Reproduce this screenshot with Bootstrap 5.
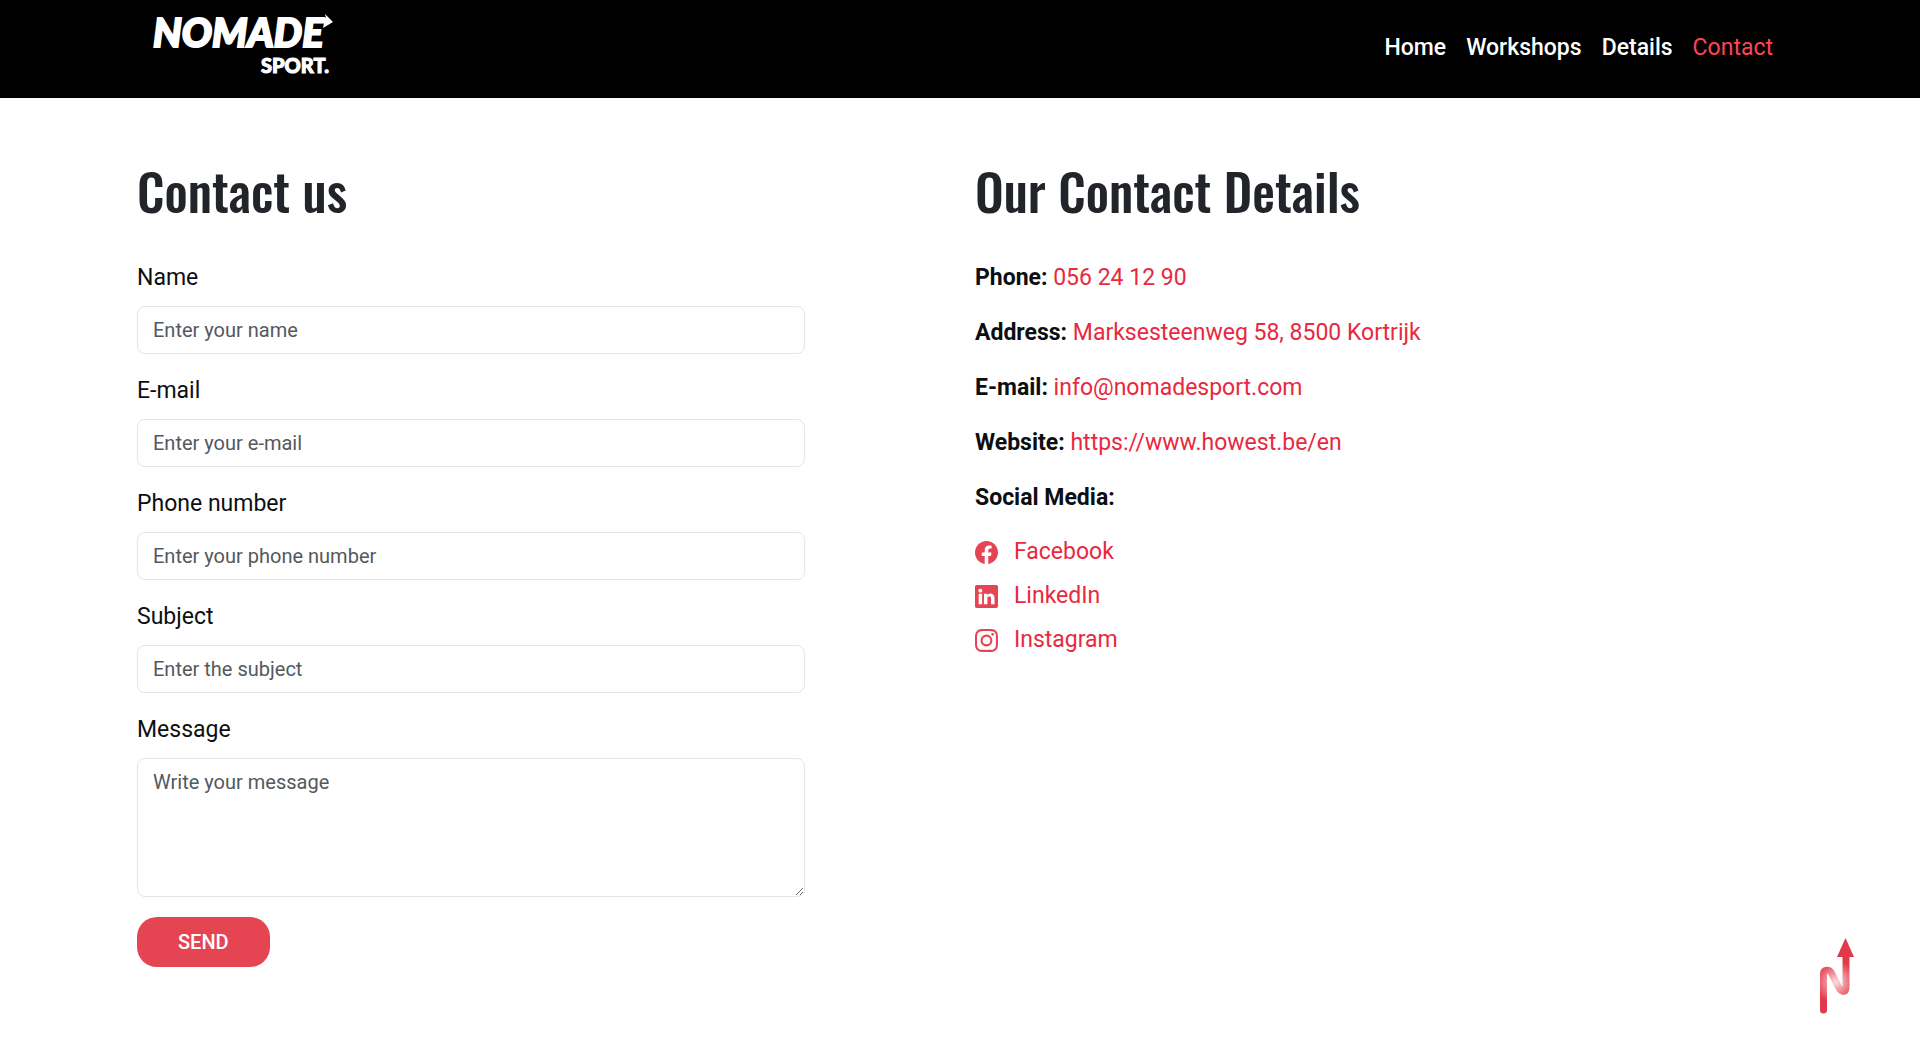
<!DOCTYPE html>
<html lang="en">
<head>
<meta charset="utf-8">
<meta name="viewport" content="width=device-width, initial-scale=1">
<title>Nomade Sport - Contact</title>
<link href="https://cdn.jsdelivr.net/npm/bootstrap@5.3.0/dist/css/bootstrap.min.css" rel="stylesheet">
<style>
  :root { --nomade-red: #e54552; --nomade-link: #e8293e; }
  body { font-family: Roboto, "Liberation Sans", sans-serif; font-size: 23px; line-height: 34px; color: #0c0f12; background: #fff; }
  .container, .page-main .row { --bs-gutter-x: 30px; }
  @media (min-width: 1700px) { .container { max-width: 1676px; } }
  .site-nav { background: #000; padding: 10px 0 16px; }
  .site-nav .navbar-brand { padding: 0; margin-left: 15px; }
  .site-nav .navbar-nav { --bs-nav-link-padding-y: 8px; }
  .site-nav .nav-link { color: #fff; font-weight: 500; padding-left: 10px !important; padding-right: 10px !important; }
  .site-nav .nav-link.active { color: #ff4358; font-weight: 400; }
  .logo-main { font: italic 900 40px Lato, sans-serif; stroke: #fff; stroke-width: 2px; }
  .logo-sub { font: 900 20px Lato, sans-serif; stroke: #fff; stroke-width: 1px; }
  .page-main { padding-top: 62px; padding-bottom: 60px; }
  .page-title { font-family: Oswald, "Liberation Sans Narrow", "Liberation Sans", sans-serif; font-size: 51px; line-height: 60px; font-weight: 500; color: #212529; margin-bottom: 40px; }
  .field { margin-bottom: 19px; }
  .field .form-label { display: block; line-height: 36px; margin-bottom: 10px; }
  .field .form-control { font-size: 20px; line-height: 30px; padding: 8px 15px; border-color: #e2e6e9; border-radius: 8px; }
  .field .form-control::placeholder { color: #54595e; opacity: 1; }
  .field textarea.form-control { height: 139px; display: block; }
  .btn-send { background: var(--nomade-red); color: #fff; font-size: 20px; line-height: 30px; font-weight: 500; margin-top: 1px; padding: 9px 40px; border-radius: 20px; }
  .btn-send:hover { background: #c93643; color: #fff; }
  .facts { gap: 19px; line-height: 36px; }
  .facts a, .social a { color: var(--nomade-link); text-decoration: none; }
  .social { margin-top: 19px; gap: 10px; }
  .social a { gap: 16px; }
  .social svg { width: 23px; height: 23px; fill: var(--nomade-red); }
  .to-top { right: 64px; bottom: 26px; line-height: 0; }
</style>
<script src="https://cdn.jsdelivr.net/npm/bootstrap@5.3.0/dist/js/bootstrap.bundle.min.js" defer></script>
</head>
<body>
<nav class="navbar navbar-expand site-nav">
  <div class="container">
    <a class="navbar-brand" href="#" aria-label="Nomade Sport">
      <svg class="d-block" width="184" height="72" viewBox="0 0 184 72" fill="#fff">
        <text class="logo-main" x="1" y="37">NOMADE</text>
        <text class="logo-sub" x="177" y="63" text-anchor="end">SPORT.</text>
        <path d="M160 8H174L173 4L181 12L171 18L172 13H160Z"/>
      </svg>
    </a>
    <ul class="navbar-nav ms-auto pt-1">
      <li class="nav-item"><a class="nav-link" href="#">Home</a></li>
      <li class="nav-item"><a class="nav-link" href="#">Workshops</a></li>
      <li class="nav-item"><a class="nav-link" href="#">Details</a></li>
      <li class="nav-item"><a class="nav-link active" aria-current="page" href="#">Contact</a></li>
    </ul>
  </div>
</nav>

<main class="container page-main">
  <div class="row">
    <section class="col-12 col-lg-5">
      <h1 class="page-title">Contact us</h1>
      <form>
        <div class="field">
          <label class="form-label" for="name">Name</label>
          <input class="form-control" type="text" id="name" placeholder="Enter your name">
        </div>
        <div class="field">
          <label class="form-label" for="email">E-mail</label>
          <input class="form-control" type="email" id="email" placeholder="Enter your e-mail">
        </div>
        <div class="field">
          <label class="form-label" for="phone">Phone number</label>
          <input class="form-control" type="tel" id="phone" placeholder="Enter your phone number">
        </div>
        <div class="field">
          <label class="form-label" for="subject">Subject</label>
          <input class="form-control" type="text" id="subject" placeholder="Enter the subject">
        </div>
        <div class="field">
          <label class="form-label" for="message">Message</label>
          <textarea class="form-control" id="message" placeholder="Write your message"></textarea>
        </div>
        <button class="btn btn-send" type="button">SEND</button>
      </form>
    </section>

    <section class="col-12 col-lg-6 offset-lg-1">
      <h2 class="page-title">Our Contact Details</h2>
      <div class="facts d-flex flex-column">
        <p class="mb-0"><strong>Phone:</strong> <a href="#">056 24 12 90</a></p>
        <p class="mb-0"><strong>Address:</strong> <a href="#">Marksesteenweg 58, 8500 Kortrijk</a></p>
        <p class="mb-0"><strong>E-mail:</strong> <a href="#">info@nomadesport.com</a></p>
        <p class="mb-0"><strong>Website:</strong> <a href="#">https://www.howest.be/en</a></p>
        <p class="mb-0"><strong>Social Media:</strong></p>
      </div>
      <ul class="social list-unstyled d-flex flex-column align-items-start mb-0">
        <li><a class="d-flex align-items-center" href="#">
          <svg viewBox="0 0 16 16" aria-hidden="true"><path d="M16 8.049c0-4.446-3.582-8.05-8-8.05C3.58 0-.002 3.603-.002 8.05c0 4.017 2.926 7.347 6.75 7.951v-5.625h-2.03V8.05H6.75V6.275c0-2.017 1.195-3.131 3.022-3.131.876 0 1.791.157 1.791.157v1.98h-1.009c-.993 0-1.303.621-1.303 1.258v1.51h2.218l-.354 2.326H9.25V16c3.824-.604 6.75-3.934 6.75-7.951z"/></svg>
          Facebook</a></li>
        <li><a class="d-flex align-items-center" href="#">
          <svg viewBox="0 0 16 16" aria-hidden="true"><path d="M0 1.146C0 .513.526 0 1.175 0h13.65C15.474 0 16 .513 16 1.146v13.708c0 .633-.526 1.146-1.175 1.146H1.175C.526 16 0 15.487 0 14.854V1.146zm4.943 12.248V6.169H2.542v7.225h2.401zm-1.2-8.212c.837 0 1.358-.554 1.358-1.248-.015-.709-.52-1.248-1.342-1.248-.822 0-1.359.54-1.359 1.248 0 .694.521 1.248 1.327 1.248h.016zm4.908 8.212V9.359c0-.216.016-.432.08-.586.173-.431.568-.878 1.232-.878.869 0 1.216.662 1.216 1.634v3.865h2.401V9.25c0-2.22-1.184-3.252-2.764-3.252-1.274 0-1.845.7-2.165 1.193v.025h-.016a5.54 5.54 0 0 1 .016-.025V6.169h-2.4c.03.678 0 7.225 0 7.225h2.4z"/></svg>
          LinkedIn</a></li>
        <li><a class="d-flex align-items-center" href="#">
          <svg viewBox="0 0 16 16" aria-hidden="true"><path d="M8 0C5.829 0 5.556.01 4.703.048 3.85.088 3.269.222 2.76.42a3.917 3.917 0 0 0-1.417.923A3.927 3.927 0 0 0 .42 2.76C.222 3.268.087 3.85.048 4.7.01 5.555 0 5.827 0 8.001c0 2.172.01 2.444.048 3.297.04.852.174 1.433.372 1.942.205.526.478.972.923 1.417.444.445.89.719 1.416.923.51.198 1.09.333 1.942.372C5.555 15.99 5.827 16 8 16s2.444-.01 3.298-.048c.851-.04 1.434-.174 1.943-.372a3.916 3.916 0 0 0 1.416-.923c.445-.445.718-.891.923-1.417.197-.509.332-1.09.372-1.942C15.99 10.445 16 10.173 16 8s-.01-2.445-.048-3.299c-.04-.851-.175-1.433-.372-1.941a3.926 3.926 0 0 0-.923-1.417A3.911 3.911 0 0 0 13.24.42c-.51-.198-1.092-.333-1.943-.372C10.443.01 10.172 0 7.998 0h.003zm-.717 1.442h.718c2.136 0 2.389.007 3.232.046.78.035 1.204.166 1.486.275.373.145.64.319.92.599.28.28.453.546.598.92.11.281.24.705.275 1.485.039.843.047 1.096.047 3.231s-.008 2.389-.047 3.232c-.035.78-.166 1.203-.275 1.485a2.47 2.47 0 0 1-.599.919c-.28.28-.546.453-.92.598-.28.11-.704.24-1.485.276-.843.038-1.096.047-3.232.047s-2.39-.009-3.233-.047c-.78-.036-1.203-.166-1.485-.276a2.478 2.478 0 0 1-.92-.598 2.48 2.48 0 0 1-.6-.92c-.109-.281-.24-.705-.275-1.485-.038-.843-.046-1.096-.046-3.233 0-2.136.008-2.388.046-3.231.036-.78.166-1.204.276-1.486.145-.373.319-.64.599-.92.28-.28.546-.453.92-.598.282-.11.705-.24 1.485-.276.738-.034 1.024-.044 2.515-.045v.002zm4.988 1.328a.96.96 0 1 0 0 1.92.96.96 0 0 0 0-1.92zm-4.27 1.122a4.109 4.109 0 1 0 0 8.217 4.109 4.109 0 0 0 0-8.217zm0 1.441a2.667 2.667 0 1 1 0 5.334 2.667 2.667 0 0 1 0-5.334z"/></svg>
          Instagram</a></li>
      </ul>
    </section>
  </div>
</main>

<a class="to-top position-fixed" href="#" aria-label="Back to top">
  <svg width="38" height="78" viewBox="28 17 38 78">
    <defs>
      <radialGradient id="shine" gradientUnits="userSpaceOnUse" cx="46" cy="63" r="21">
        <stop offset="0" stop-color="#fbdfe2"/>
        <stop offset=".45" stop-color="#f08f99"/>
        <stop offset="1" stop-color="#e23a4b"/>
      </radialGradient>
    </defs>
    <path d="M33.500 91V55C33.500 50.500 39 50 41.500 54L48 67C52 75 56 73 56 68V36" fill="none" stroke="url(#shine)" stroke-width="7" stroke-linecap="round" stroke-linejoin="round"/>
    <path d="M55.500 19L47 38H64Z" fill="#e23a4b"/>
  </svg>
</a>
</body>
</html>
